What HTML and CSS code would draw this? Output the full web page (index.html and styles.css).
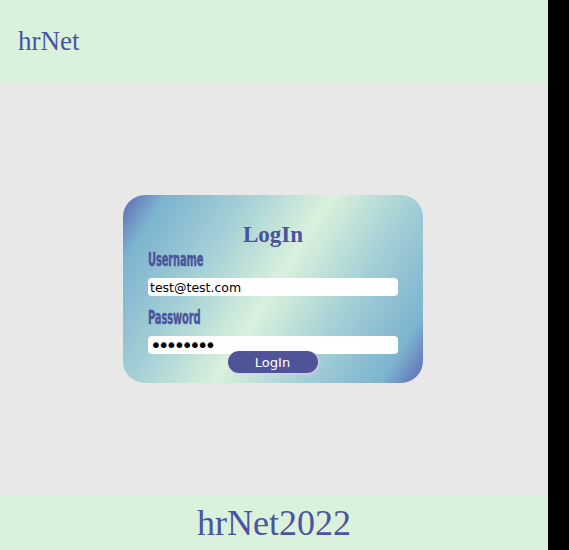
FILE: index.html
```html
<!DOCTYPE html>
<html>
<head>
<meta charset="utf-8">
<link rel="stylesheet" href="styles.css">
</head>
<body>
<div class="page">
  <header class="header"><span class="brand">hrNet</span></header>
  <main class="main">
    <form class="card">
      <h1 class="title">LogIn</h1>
      <label class="label"><span class="label-text">Username</span></label>
      <input class="field" type="text" value="test@test.com">
      <label class="label"><span class="label-text">Password</span></label>
      <input class="field pw" type="password" value="password">
      <button class="btn" type="button">LogIn</button>
    </form>
  </main>
  <footer class="footer">hrNet2022</footer>
</div>
</body>
</html>
```
FILE: styles.css
```css
html { background: #000; }
body { margin: 0; }
.page {
  width: 548px;
  height: 550px;
  display: flex;
  flex-direction: column;
  background: #e8e8e8;
}
.header {
  height: 84px;
  background: #daf1dc;
  display: flex;
  align-items: center;
  padding-left: 18px;
  box-sizing: border-box;
}
.brand {
  font-family: "Liberation Serif", serif;
  font-size: 27px;
  color: #4b549e;
  margin-top: -2px;
}
.main {
  height: 411px;
  display: flex;
  align-items: center;
  justify-content: center;
}
.card {
  width: 300px;
  height: 188px;
  box-sizing: border-box;
  border-radius: 22px;
  background: linear-gradient(122deg, #5d68b2 0%, #7db3cf 10%, #a4d0d6 30%, #daf1dc 50%, #a4d0d6 70%, #7db3cf 90%, #5d68b2 100%);
  padding: 25px 25px 0 25px;
  display: flex;
  flex-direction: column;
  margin-top: -1px;
  margin-left: -2px;
}
.title {
  margin: 0;
  text-align: center;
  font-family: "Liberation Serif", serif;
  font-weight: bold;
  font-size: 23px;
  line-height: 30px;
  color: #4b529c;
}
.label {
  display: block;
  height: 30px;
  margin-top: -2px;
}
.label-text {
  display: inline-block;
  font-family: "DejaVu Sans Condensed", "DejaVu Sans", sans-serif;
  font-weight: bold;
  font-size: 19px;
  line-height: 22px;
  color: #4c539c;
  transform: scale(0.58, 1.02);
  transform-origin: left center;
  letter-spacing: -0.2px;
  -webkit-text-stroke: 0.4px #4c539c;
}
.field {
  width: 250px;
  height: 18px;
  box-sizing: border-box;
  border: none;
  border-radius: 4px;
  background: #fff;
  padding: 0 2px;
  margin: 0 0 12px 0;
  font-family: "DejaVu Sans", sans-serif;
  font-size: 12.5px;
  color: #000;
  outline: none;
}
.pw { margin-bottom: 0; font-size: 20px; letter-spacing: -4px; line-height: 18px; }
.btn {
  align-self: center;
  width: 90px;
  height: 22px;
  margin-top: -3px;
  margin-left: -1px;
  border: none;
  border-radius: 11px;
  background: #4f5499;
  color: #fff;
  font-family: "DejaVu Sans", sans-serif;
  font-size: 13px;
  box-shadow: 1px 1px 3px #e9c8ea;
  padding: 0;
}
.footer {
  height: 55px;
  background: #daf1dc;
  display: flex;
  align-items: center;
  justify-content: center;
  font-family: "Liberation Serif", serif;
  font-size: 36px;
  color: #4b549e;
}
```
